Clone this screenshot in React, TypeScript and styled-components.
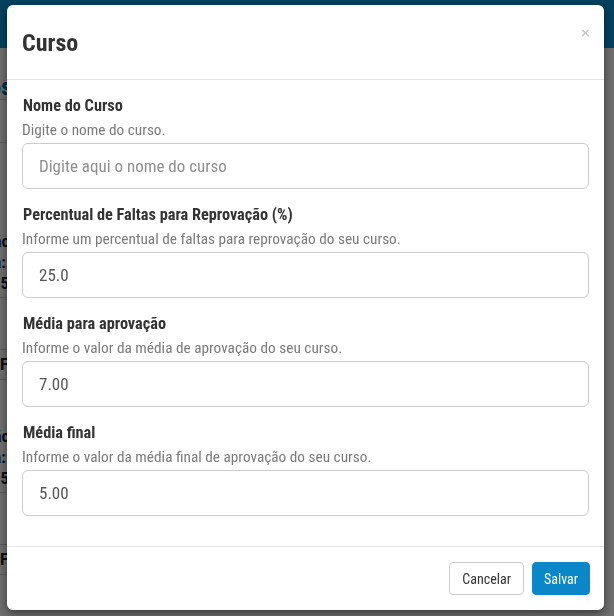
import React from "react";
import styled, { createGlobalStyle } from "styled-components";

const GlobalStyle = createGlobalStyle`
  html, body { margin: 0; padding: 0; }
  body {
    font-family: "Liberation Sans Narrow", "Roboto Condensed", Roboto, "Liberation Sans", sans-serif;
    background: #dcdcdc;
    overflow: hidden;
  }
  * { box-sizing: border-box; }
`;

const Page = styled.div`
  min-height: 616px;
  background: #dcdcdc;
`;

const TopBar = styled.div`
  height: 48px;
  background: #0a80bf;
`;

const Main = styled.div`
  margin-left: -60px;
  width: 72px;
  padding-top: 26px;
  color: #16202c;
  text-align: right;
  white-space: nowrap;
`;

const PageTitle = styled.h2`
  margin: 0;
  font-size: 24px;
  line-height: 26px;
  font-weight: 700;
  color: #0b5f92;
  height: 26px;
  padding-right: 0;
  border-bottom: 1px solid #b8b8b8;
`;

const Toolbar = styled.div`
  height: 43px;
  border-bottom: 1px solid #b8b8b8;
`;

const Filters = styled.div`
  height: 42px;
`;

const Card = styled.div`
  padding: 46px 0 3px;
  border-bottom: 1px solid #b8b8b8;
  font-size: 17px;
  font-weight: 700;
`;

const CardLine = styled.div<{ $shift?: number }>`
  line-height: 21px;
  padding-right: ${(p) => p.$shift ?? 0}px;
`;

const CardRow = styled.div`
  margin-top: 51px;
  height: 31px;
  line-height: 29px;
  border-top: 1px solid #b8b8b8;
  border-bottom: 1px solid #b8b8b8;
  font-size: 17px;
  font-weight: 700;
  padding-right: 4px;
`;

const Backdrop = styled.div`
  position: fixed;
  inset: 0;
  background: rgba(0, 0, 0, 0.5);
`;

const ModalLayer = styled.div`
  position: fixed;
  inset: 0;
`;

const Dialog = styled.div`
  width: 597px;
  margin: 5px 0 0 7px;
  background: #fff;
  border-radius: 6px;
  box-shadow: 0 3px 9px rgba(0, 0, 0, 0.5);
`;

const Header = styled.div`
  height: 75px;
  padding: 0 15px;
  border-bottom: 1px solid #e5e5e5;
  display: flex;
  align-items: flex-start;
  justify-content: space-between;
`;

const Title = styled.h4`
  margin: 24px 0 0;
  font-size: 24px;
  line-height: 28px;
  font-weight: 700;
  color: #333;
`;

const Close = styled.button`
  margin-top: 20px;
  margin-right: -2px;
  border: 0;
  background: none;
  padding: 0;
  font-family: "DejaVu Sans", sans-serif;
  font-size: 13px;
  line-height: 16px;
  font-weight: 700;
  color: #c8c8c8;
  cursor: pointer;
`;

const Body = styled.div`
  padding: 16px 15px 14px;
`;

const Group = styled.div`
  margin-bottom: 16px;
`;

const Label = styled.label`
  display: block;
  font-size: 16.3px;
  line-height: 20px;
  font-weight: 700;
  color: #333;
  margin-bottom: 4px;
  padding-left: 1px;
`;

const Help = styled.div`
  font-size: 15.3px;
  line-height: 20px;
  color: #7a7a7a;
  margin-bottom: 3px;
`;

const Input = styled.input`
  display: block;
  width: 100%;
  height: 46px;
  padding: 0 16px;
  border: 1px solid #cccccc;
  border-radius: 6px;
  font-family: inherit;
  font-size: 17px;
  color: #555;
  background: #fff;
  outline: none;
  &::placeholder { color: #8f8f8f; }
`;

const Footer = styled.div`
  border-top: 1px solid #e5e5e5;
  padding: 15px 14px 15px;
  display: flex;
  justify-content: flex-end;
  gap: 8px;
`;

const Button = styled.button<{ $primary?: boolean }>`
  height: 33px;
  padding: 0 ${(p) => (p.$primary ? 11 : 12)}px;
  border-radius: 4px;
  font-family: inherit;
  font-size: 14px;
  border: 1px solid ${(p) => (p.$primary ? "#0b87c9" : "#cccccc")};
  background: ${(p) => (p.$primary ? "#0b87c9" : "#fff")};
  color: ${(p) => (p.$primary ? "#fff" : "#333")};
  cursor: pointer;
`;

const fields = [
  { label: "Nome do Curso", help: "Digite o nome do curso.", value: "", placeholder: "Digite aqui o nome do curso" },
  { label: "Percentual de Faltas para Reprovação (%)", help: "Informe um percentual de faltas para reprovação do seu curso.", value: "25.0" },
  { label: "Média para aprovação", help: "Informe o valor da média de aprovação do seu curso.", value: "7.00" },
  { label: "Média final", help: "Informe o valor da média final de aprovação do seu curso.", value: "5.00" },
];

export default function App() {
  return (
    <>
      <GlobalStyle />
      <Page>
        <TopBar />
        <Main>
          <PageTitle>Cursos</PageTitle>
          <Toolbar />
          <Filters />
          {[0, 1].map((i) => (
            <div key={i}>
              <Card>
                <CardLine $shift={2}>Duração</CardLine>
                <CardLine $shift={6}>Nota:</CardLine>
                <CardLine $shift={3}>25</CardLine>
              </Card>
              <CardRow>AGF</CardRow>
            </div>
          ))}
        </Main>
      </Page>
      <Backdrop />
      <ModalLayer>
        <Dialog>
          <Header>
            <Title>Curso</Title>
            <Close aria-label="Fechar">×</Close>
          </Header>
          <Body>
            {fields.map((f) => (
              <Group key={f.label}>
                <Label>{f.label}</Label>
                <Help>{f.help}</Help>
                <Input defaultValue={f.value} placeholder={f.placeholder} />
              </Group>
            ))}
          </Body>
          <Footer>
            <Button>Cancelar</Button>
            <Button $primary>Salvar</Button>
          </Footer>
        </Dialog>
      </ModalLayer>
    </>
  );
}
